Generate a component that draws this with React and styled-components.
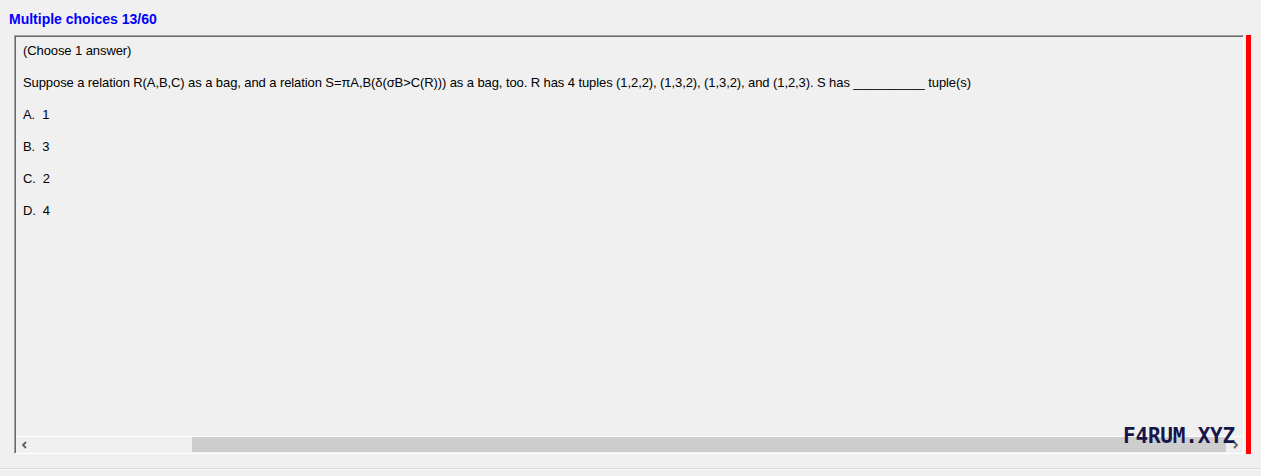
import styled, { createGlobalStyle } from "styled-components";

const GlobalStyle = createGlobalStyle`
  html, body {
    margin: 0;
    padding: 0;
    background: #f0f0f0;
  }
  body {
    width: 1261px;
    height: 476px;
    overflow: hidden;
    font-family: "Liberation Sans", Arial, sans-serif;
  }
`;

const Page = styled.div`
  display: flex;
  flex-direction: column;
  height: 476px;
`;

const Header = styled.div`
  height: 35px;
  padding: 11px 0 0 9px;
  box-sizing: border-box;
  color: #0000ff;
  font-weight: bold;
  font-size: 14px;
  line-height: 16px;
`;

const Body = styled.div`
  display: flex;
  align-items: stretch;
  gap: 2px;
  padding-left: 14px;
  height: 419px;
`;

const Frame = styled.div`
  position: relative;
  width: 1230px;
  box-sizing: border-box;
  display: flex;
  flex-direction: column;
  border-top: 1px solid #a0a0a0;
  border-left: 1px solid #a0a0a0;
  border-right: 1px solid #ffffff;
  border-bottom: 1px solid #ffffff;
  box-shadow: inset 1px 1px 0 #696969;
`;

const Content = styled.div`
  flex: 1;
  padding: 7px 0 0 8px;
  color: #000;
  font-size: 13px;
  line-height: 16px;
  letter-spacing: -0.09px;
`;

const Line = styled.p`
  margin: 0 0 16px;
  white-space: pre;
`;

const ScrollBar = styled.div`
  height: 16px;
  display: flex;
  align-items: stretch;
  border-top: 1px solid #ffffff;
  margin-left: 1px;
`;

const Arrow = styled.div`
  width: 17px;
  display: flex;
  align-items: center;
  justify-content: center;
`;

const Track = styled.div`
  flex: 1;
  display: flex;
  padding: 0 0 1px 159px;
`;

const Thumb = styled.div`
  flex: 1;
  background: #cdcdcd;
`;

const RedBar = styled.div`
  width: 5px;
  background: #ff0000;
`;

const Watermark = styled.div`
  position: absolute;
  right: 8px;
  bottom: 7px;
  font-family: "DejaVu Sans Mono", "Liberation Mono", monospace;
  font-weight: bold;
  font-size: 21px;
  letter-spacing: -0.2px;
  color: #16164a;
  line-height: 20px;
`;

const Footer = styled.div`
  margin-top: 14px;
  border-top: 1px solid #dcdcdc;
  box-shadow: 0 1px 0 #f8f8f8;
`;

const Chevron = ({ dir }) => (
  <svg width="8" height="8" viewBox="0 0 8 8">
    <path
      d={dir === "left" ? "M5 1 L2 4 L5 7" : "M3 1 L6 4 L3 7"}
      fill="none"
      stroke="#606060"
      strokeWidth="1.8"
    />
  </svg>
);

const lines = [
  "(Choose 1 answer)",
  "Suppose a relation R(A,B,C) as a bag, and a relation S=πA,B(δ(σB>C(R))) as a bag, too. R has 4 tuples (1,2,2), (1,3,2), (1,3,2), and (1,2,3). S has __________ tuple(s)",
  "A.  1",
  "B.  3",
  "C.  2",
  "D.  4",
];

export default function App() {
  return (
    <>
      <GlobalStyle />
      <Page>
        <Header>Multiple choices 13/60</Header>
        <Body>
          <Frame>
            <Content>
              {lines.map((l, i) => (
                <Line key={i}>{l}</Line>
              ))}
            </Content>
            <ScrollBar>
              <Arrow>
                <Chevron dir="left" />
              </Arrow>
              <Track>
                <Thumb />
              </Track>
              <Arrow>
                <Chevron dir="right" />
              </Arrow>
            </ScrollBar>
            <Watermark>F4RUM.XYZ</Watermark>
          </Frame>
          <RedBar />
        </Body>
        <Footer />
      </Page>
    </>
  );
}
